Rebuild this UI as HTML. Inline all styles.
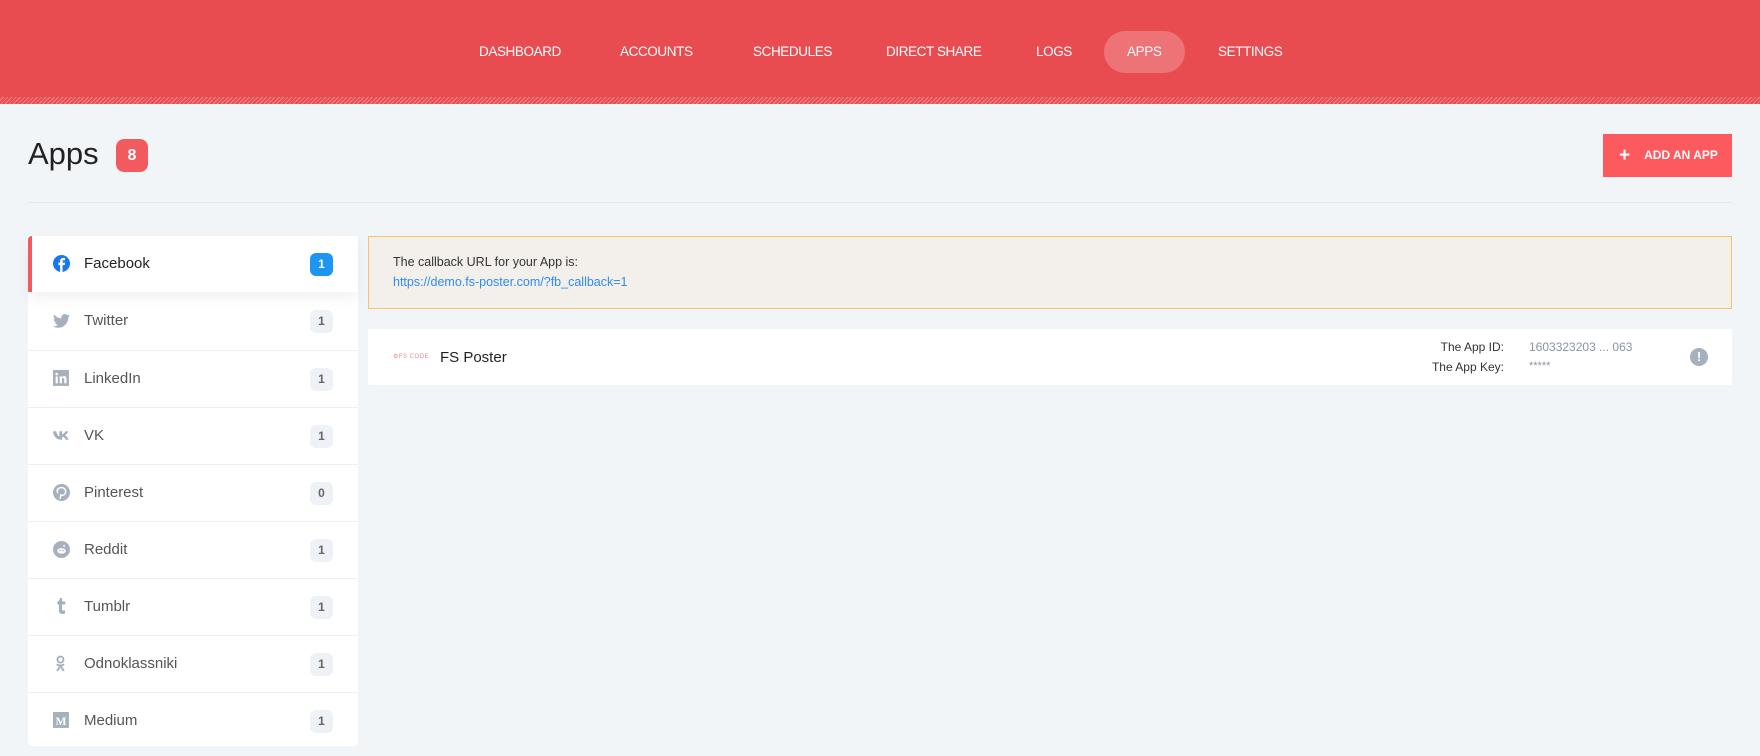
<!DOCTYPE html>
<html><head><meta charset="utf-8">
<style>
*{box-sizing:border-box;margin:0;padding:0}
body{width:1760px;height:756px;overflow:hidden;background:#f2f5f8;font-family:"Liberation Sans",sans-serif;color:#333;position:relative}
.hdr{position:absolute;left:0;top:0;width:1760px;height:104px;background:#e84c51}
.hdr .stripe{position:absolute;left:0;right:0;bottom:0;height:7px;background:repeating-linear-gradient(135deg,#e84c51 0 2px,#f0888b 2px 3px)}
.nav{position:absolute;top:44px;color:#fff;font-size:13.5px;letter-spacing:-0.4px}
.pill{position:absolute;left:1104px;top:31px;width:81px;height:42px;border-radius:21px;background:#ee7377}
h1{position:absolute;left:28px;top:136px;font-weight:normal;font-size:31px;color:#222}
.badge8{position:absolute;left:116px;top:139px;width:32px;height:33px;border-radius:8px;background:#f25a5f;color:#fff;font-size:16px;font-weight:bold;text-align:center;line-height:33px}
.btn{position:absolute;left:1603px;top:134px;width:129px;height:43px;background:#fd5a5f;color:#fff;font-size:12px;font-weight:bold;line-height:43px;padding-left:16px}
.btn b{font-size:19px;vertical-align:-2px;margin-right:14px}
.div{position:absolute;left:28px;top:202px;width:1704px;height:1px;background:#e3e7ef}
.side{position:absolute;left:28px;top:236px;width:330px;height:510px;background:#fff;border-radius:4px}
.row{position:absolute;left:0;width:330px;height:57px;border-top:1px solid #eceff4}
.row .ic{position:absolute;left:25px;top:19px;width:17px;height:17px}
.row .t{position:absolute;left:56px;top:19px;font-size:15px;color:#555}
.row .c{position:absolute;left:282px;top:17px;width:23px;height:23px;border-radius:6px;background:#eef1f6;color:#666;font-size:12px;font-weight:bold;text-align:center;line-height:23px}
.row.act{border-top:none;border-left:4px solid #f25a5f;box-shadow:0 6px 14px rgba(0,0,0,0.06);z-index:2;background:#fff;border-radius:4px 0 0 0}
.row.act .t{color:#222;left:52px}
.row.act .ic{left:21px}
.row.act .c{left:278px;background:#1c96f2;color:#fff}
.note{position:absolute;left:368px;top:236px;width:1364px;height:73px;background:#f3f0eb;border:1px solid #fbc06a}
.note p{position:absolute;left:24px;font-size:12.5px;color:#333}
.card{position:absolute;left:368px;top:329px;width:1364px;height:56px;background:#fff;border-radius:2px}
</style></head><body>
<div class="hdr"><div class="stripe"></div>
<div class="pill"></div>
<span class="nav" style="left:479px">DASHBOARD</span>
<span class="nav" style="left:620px">ACCOUNTS</span>
<span class="nav" style="left:753px">SCHEDULES</span>
<span class="nav" style="left:886px">DIRECT SHARE</span>
<span class="nav" style="left:1036px">LOGS</span>
<span class="nav" style="left:1127px">APPS</span>
<span class="nav" style="left:1218px">SETTINGS</span>
</div>
<h1>Apps</h1><div class="badge8">8</div>
<div class="btn"><b>+</b>ADD AN APP</div>
<div class="div"></div>

<div class="side">
<div class="row act" style="top:0;height:56px"><svg class="ic" viewBox="0 0 16 16"><circle cx="8" cy="8" r="8" fill="#1877f2"/><path d="M9 16V9.5h2l.3-2.3H9V6c0-.7.2-1.1 1.1-1.1h1.2V2.8c-.2 0-.9-.1-1.7-.1-1.7 0-2.9 1-2.9 2.9v1.6H5v2.3h1.7V16z" fill="#fff"/></svg><span class="t">Facebook</span><span class="c">1</span></div>
<div class="row" style="top:57px;border-top:none"><svg class="ic" viewBox="0 0 16 16"><path d="M16 3.5a6.5 6.5 0 0 1-1.9.5 3.3 3.3 0 0 0 1.4-1.8 6.6 6.6 0 0 1-2 .8A3.3 3.3 0 0 0 7.9 6 9.3 9.3 0 0 1 1.1 2.5a3.3 3.3 0 0 0 1 4.4 3.3 3.3 0 0 1-1.5-.4 3.3 3.3 0 0 0 2.6 3.2 3.3 3.3 0 0 1-1.5.1 3.3 3.3 0 0 0 3.1 2.3A6.6 6.6 0 0 1 0 13.4 9.3 9.3 0 0 0 14.3 5c.7-.4 1.2-1 1.7-1.5z" fill="#a6b1bd"/></svg><span class="t">Twitter</span><span class="c">1</span></div>
<div class="row" style="top:114px"><svg class="ic" viewBox="0 0 16 16"><rect width="15" height="15" fill="#a6b1bd"/><rect x="2.5" y="6" width="2" height="6.5" fill="#fff"/><circle cx="3.5" cy="3.8" r="1.2" fill="#fff"/><path d="M6.3 6h2v1c.4-.7 1.2-1.2 2.2-1.2 1.8 0 2.2 1.1 2.2 2.7v4H10.6V9c0-.8-.1-1.5-1-1.5s-1.2.7-1.2 1.5v3.5H6.3z" fill="#fff"/></svg><span class="t">LinkedIn</span><span class="c">1</span></div>
<div class="row" style="top:171px"><svg class="ic" viewBox="0 0 16 16"><path d="M0 4h3c.5 2 1.8 4.5 3 4.7V4h2.6v2.8C10 6.6 11.3 5 11.8 4h2.5c-.4 1.7-1.9 3.2-2.8 3.9 1 .6 2.5 2 3.3 4.1h-2.8c-.6-1.4-1.8-2.6-3.4-2.8V12H8.3C3 12 .3 8.5 0 4z" fill="#a6b1bd"/></svg><span class="t">VK</span><span class="c">1</span></div>
<div class="row" style="top:228px"><svg class="ic" viewBox="0 0 16 16"><circle cx="8" cy="8" r="8" fill="#a6b1bd"/><path d="M7.5 10.5L6.6 14M7 9.8c.3.5 1 .9 1.7.9 2 0 3.2-1.7 3.2-3.8 0-2-1.7-3.6-4-3.6C5.2 3.3 4 5.1 4 6.6c0 .9.3 1.6 1 1.9" stroke="#fff" stroke-width="1.4" fill="none"/></svg><span class="t">Pinterest</span><span class="c">0</span></div>
<div class="row" style="top:285px"><svg class="ic" viewBox="0 0 16 16"><circle cx="8" cy="8" r="8" fill="#a6b1bd"/><ellipse cx="8" cy="9.3" rx="4" ry="2.6" fill="#fff"/><circle cx="6.5" cy="9" r=".7" fill="#a6b1bd"/><circle cx="9.5" cy="9" r=".7" fill="#a6b1bd"/><circle cx="10.5" cy="4.5" r=".9" fill="#fff"/></svg><span class="t">Reddit</span><span class="c">1</span></div>
<div class="row" style="top:342px"><svg class="ic" viewBox="0 0 16 16"><path d="M4 6V3.5C5.5 3 6.3 2 6.5 0h2v3.2h3V6h-3v4.5c0 1.2.8 1.7 2.8 1.2v3c-3.6 1-5.8-.4-5.8-3.2V6z" fill="#a6b1bd"/></svg><span class="t">Tumblr</span><span class="c">1</span></div>
<div class="row" style="top:399px"><svg class="ic" viewBox="0 0 16 16"><circle cx="7" cy="4.3" r="2.8" stroke="#a6b1bd" stroke-width="1.8" fill="none"/><path d="M3.5 8.8c2.2 1.4 4.8 1.4 7 0M7 10.3L3.8 15M7 10.3l3.2 4.7" stroke="#a6b1bd" stroke-width="1.8" fill="none"/></svg><span class="t">Odnoklassniki</span><span class="c">1</span></div>
<div class="row" style="top:456px"><svg class="ic" viewBox="0 0 16 16"><rect width="15" height="15" fill="#a6b1bd"/><text x="7.5" y="12" font-size="11" font-family="Liberation Serif" font-weight="bold" fill="#fff" text-anchor="middle">M</text></svg><span class="t">Medium</span><span class="c">1</span></div>
</div>

<div class="note"><p style="top:18px">The callback URL for your App is:</p><p style="top:38px;color:#2d8cf0">https://demo.fs-poster.com/?fb_callback=1</p></div>

<div class="card">
<span style="position:absolute;left:25px;top:24px;font-size:6px;color:#e88;letter-spacing:.5px">⚙FS CODE</span>
<span style="position:absolute;left:72px;top:20px;font-size:15px;color:#222">FS Poster</span>
<span style="position:absolute;right:228px;top:11px;font-size:12px;color:#333">The App ID:</span>
<span style="position:absolute;right:228px;top:31px;font-size:12px;color:#333">The App Key:</span>
<span style="position:absolute;left:1161px;top:11px;font-size:12px;color:#8a95a3">1603323203 ... 063</span>
<span style="position:absolute;left:1161px;top:31px;font-size:11px;color:#8a95a3">*****</span>
<div style="position:absolute;left:1322px;top:19px;width:18px;height:18px;border-radius:50%;background:#a6b1bd;color:#fff;font-size:13px;font-weight:bold;text-align:center;line-height:18px">!</div>
</div>
</body></html>
